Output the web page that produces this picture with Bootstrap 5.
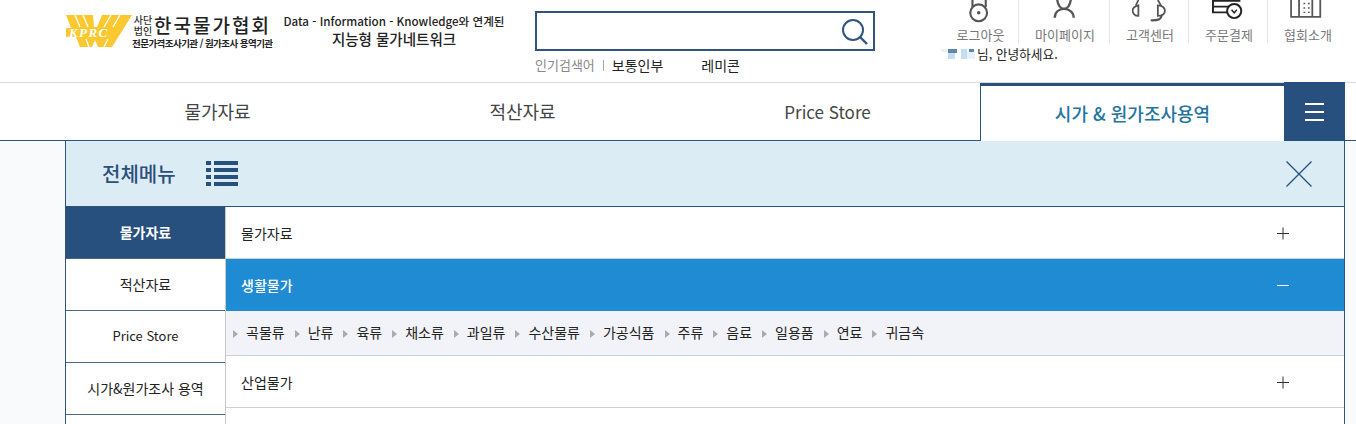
<!DOCTYPE html>
<html lang="ko">
  <head>
    <meta charset="UTF-8" />
    <meta name="viewport" content="width=device-width, initial-scale=1.0" />
    <title>한국물가협회</title>
    <link href="https://cdn.jsdelivr.net/npm/bootstrap@5.3.0/dist/css/bootstrap.min.css" rel="stylesheet" />
    <style>
      html, body { overflow: hidden; }
      body {
        background-color: #f9fafc;
        font-family: "Noto Sans CJK KR", "Liberation Sans", sans-serif;
        font-size: 14px;
        color: #222;
      }
      a { color: inherit; text-decoration: none; }

      /* top header */
      .top-head { height: 83px; background: #fff; border-bottom: 1px solid #ddd; padding-left: 66px; }
      .logo-wrap { width: 208px; padding-top: 14px; }
      .logo-mark { margin-top: 1px; }
      .logo-side { font-size: 10px; line-height: 11px; color: #333; width: 22px; font-weight: 500; }
      .logo-name { font-size: 19px; line-height: 22px; font-weight: 500; color: #222; letter-spacing: 2px; }
      .logo-sub { font-size: 9.5px; line-height: 12px; margin-top: 1px; font-weight: 700; color: #222; white-space: nowrap; letter-spacing: -.55px; }
      .tagline { width: 240px; margin-right: 21px; padding-top: 13px; text-align: center; color: #222; white-space: nowrap; }
      .tagline-en { font-size: 11.6px; line-height: 16px; font-weight: 500; }
      .tagline-ko { font-size: 14.5px; line-height: 19px; font-weight: 500; }
      .search-wrap { width: 340px; padding-top: 11px; }
      .search-box { height: 40px; border: 2px solid #2f5480; padding-right: 4px; }
      .hot-words { height: 20px; margin-top: 4px; font-size: 14px; line-height: 20px; }
      .hot-label { color: #888; font-size: 13px; }
      .hot-bar { width: 1px; height: 11px; background: #aaa; margin: 0 8px; }
      .hot-gap { margin-left: 38px; }
      .util-wrap { margin-left: 66px; width: 405px; }
      .util-item { height: 43px; width: 79px; color: #777; font-size: 13px; line-height: 16px; border-left: 1px solid #e6e6e6; }
      .util-item:first-child { border-left: 0; width: 77px; }
      .util-item.wide { width: 91px; }
      .util-item svg { display: block; height: 26px; width: 40px; }
      .util-text { margin-left: 2px; }
      .greet { margin-top: 3px; font-size: 12.7px; line-height: 16px; color: #222; }
      .mosaic { width: 34px; height: 10px; margin-right: 2px; }
      .mosaic-a { fill: #e6f2fa; }
      .mosaic-b { fill: #5d86ae; }
      .mosaic-c { fill: #c3def2; }

      /* main tabs */
      .tab-bar { height: 58px; background: #fff; border-bottom: 1px solid #2f5480; padding-left: 65px; padding-right: 11px; }
      .tab-link { width: 305px; font-size: 18px; color: #444; }
      .tab-latin { font-size: 17px; }
      .tab-link.is-on {
        height: 58px;
        background: #fff;
        color: #23749f;
        font-weight: 500;
        border-top: 3px solid #27507f;
        border-left: 1px solid #2f5480;
        width: 304px;
      }
      .burger { width: 61px; height: 59px; margin-top: -1px; background: #27507f; gap: 6px; }
      .burger span { display: block; width: 19px; height: 2px; background: #fff; }

      /* all menu panel */
      .menu-panel { width: 1280px; margin-left: 65px; border-left: 1px solid #2f5480; border-right: 1px solid #2f5480; background: #fff; height: 300px; }
      .menu-head { height: 66px; background: #dcecf4; border-bottom: 1px solid #2f5480; padding: 0 32px 0 36px; }
      .menu-title { font-size: 20px; font-weight: 500; color: #2c4f7c; margin-right: 30px; }
      .side-col { width: 160px; border-right: 1px solid #c9c9c9; }
      .side-link { height: 52px; padding-bottom: 1px; font-size: 14px; color: #222; border-bottom: 1px solid #4c6585; }
      .side-latin { font-size: 13px; }
      .side-link.is-on { background: #27507f; color: #fff; font-weight: 700; }
      .row-link { height: 52px; padding: 1px 54px 0 15px; font-size: 14px; color: #222; border-bottom: 1px solid #cfcfcf; }
      .row-link.is-on { background: #1f8bd3; color: #fff; font-weight: 500; border-bottom: 0; }
      .sub-row { height: 45px; background: #f2f3f8; border-bottom: 1px solid #cfcfcf; padding: 0 0 2px 7px; font-size: 14px; color: #222; }
      .sub-item { margin-right: 10px; white-space: nowrap; }
      .sub-item::before {
        content: "";
        display: inline-block;
        border-left: 5px solid #aaa;
        border-top: 4px solid transparent;
        border-bottom: 4px solid transparent;
        margin-right: 8px;
      }
      .sign-icon { width: 13px; height: 13px; }
    </style>
  </head>
  <body>
    <header class="top-head d-flex">
      <a href="#" class="logo-wrap d-flex">
        <svg class="logo-mark flex-shrink-0" width="66" height="32" viewBox="0 0 66 32">
          <polygon fill="#fbc92f" points="0,0 66,0 46,32 32,32 29,25 26,32 14,32 10,22 0,22 0,13 5,13" />
          <polygon fill="#fff" points="27,0 36,0 31,12 28,12" />
          <g stroke="#fff" stroke-width="1.3">
            <line x1="9" y1="0" x2="14" y2="12" />
            <line x1="17" y1="0" x2="22" y2="12" />
            <line x1="45" y1="0" x2="38" y2="12" />
            <line x1="54" y1="0" x2="47" y2="12" />
            <line x1="20" y1="24" x2="23" y2="32" />
            <line x1="42" y1="24" x2="38" y2="32" />
          </g>
          <text x="3" y="22" font-family="Liberation Serif, serif" font-style="italic" font-weight="700" font-size="13" letter-spacing="1.4" fill="#fff">KPRC</text>
        </svg>
        <div>
          <div class="d-flex align-items-center">
            <div class="logo-side text-center">사단 법인</div>
            <div class="logo-name">한국물가협회</div>
          </div>
          <div class="logo-sub">전문가격조사기관 / 원가조사 용역기관</div>
        </div>
      </a>
      <div class="tagline">
        <div class="tagline-en">Data - Information - Knowledge와 연계된</div>
        <div class="tagline-ko">지능형 물가네트워크</div>
      </div>
      <div class="search-wrap">
        <div class="search-box d-flex align-items-center justify-content-end">
          <svg width="30" height="30" viewBox="0 0 30 30" fill="none" stroke="#2f5480">
            <circle cx="14" cy="14" r="10" stroke-width="2" />
            <line x1="21" y1="21" x2="28" y2="28" stroke-width="2.4" />
          </svg>
        </div>
        <div class="hot-words d-flex align-items-center">
          <span class="hot-label">인기검색어</span><span class="hot-bar"></span>
          <a href="#">보통인부</a>
          <a href="#" class="hot-gap">레미콘</a>
        </div>
      </div>
      <div class="util-wrap">
        <div class="d-flex">
          <a href="#" class="util-item d-flex flex-column align-items-center">
            <svg viewBox="0 0 40 26" fill="none" stroke="#555" stroke-width="2.4">
              <path d="M11.5 8V0M26.5 8V0" />
              <circle cx="18.5" cy="14.5" r="9.5" />
              <circle cx="18.5" cy="14.5" r="2" fill="#555" stroke="none" />
            </svg>
            <span class="util-text mt-1">로그아웃</span>
          </a>
          <a href="#" class="util-item wide d-flex flex-column align-items-center">
            <svg viewBox="0 0 40 26" fill="none" stroke="#555" stroke-width="2.6">
              <path d="M12 -2C13 6 16 10 20 10C24 10 27 6 28 -2" />
              <path d="M9.5 20C9.5 14 14 10 20 10C26 10 31 14 31 20" />
            </svg>
            <span class="util-text mt-1">마이페이지</span>
          </a>
          <a href="#" class="util-item d-flex flex-column align-items-center">
            <svg viewBox="0 0 40 26" fill="none" stroke="#555" stroke-width="2">
              <path d="M8 6C4 7 1.5 9 1.5 12C1.5 15 4 18 8 18Z" />
              <path d="M8 0L5 6.5" />
              <path d="M30 6C35 6 38 9 38 12C38 16 35 18 30 18Z" />
              <path d="M30 0L34 7" />
              <path d="M34 18C34 22 30 23 23 23" stroke-width="2.6" stroke-linecap="round" />
            </svg>
            <span class="util-text mt-1">고객센터</span>
          </a>
          <a href="#" class="util-item d-flex flex-column align-items-center">
            <svg viewBox="0 0 40 26" fill="none" stroke="#222" stroke-width="2.2">
              <path d="M34 1H3V14H22M3 7.5H31" />
              <circle cx="27" cy="12.5" r="8" fill="#fff" />
              <path d="M24 11L27 14.5L30 11" stroke-width="1.6" />
            </svg>
            <span class="util-text mt-1">주문결제</span>
          </a>
          <a href="#" class="util-item d-flex flex-column align-items-center">
            <svg viewBox="0 0 40 26" fill="none" stroke="#555" stroke-width="2">
              <path d="M2 0V19H35V0M11 0V19M26 0V19" />
              <path d="M16 4H23M16 9H23M16 14H23" stroke-dasharray="2 3" stroke-width="1.6" />
            </svg>
            <span class="util-text mt-1">협회소개</span>
          </a>
        </div>
        <div class="greet d-flex align-items-center">
          <svg class="mosaic" viewBox="0 0 34 10">
            <rect class="mosaic-a" x="0" y="0" width="6" height="3" />
            <rect class="mosaic-b" x="7" y="0" width="9" height="4" />
            <rect class="mosaic-c" x="7" y="4" width="7" height="6" />
            <rect class="mosaic-c" x="20" y="0" width="6" height="10" />
            <rect class="mosaic-a" x="26" y="3" width="8" height="7" />
            <rect class="mosaic-b" x="28" y="0" width="5" height="3" />
          </svg>
          <span>님, 안녕하세요.</span>
        </div>
      </div>
    </header>

    <nav class="tab-bar d-flex">
      <a href="#" class="tab-link d-flex align-items-center justify-content-center">물가자료</a>
      <a href="#" class="tab-link d-flex align-items-center justify-content-center">적산자료</a>
      <a href="#" class="tab-link tab-latin d-flex align-items-center justify-content-center">Price Store</a>
      <a href="#" class="tab-link is-on d-flex align-items-center justify-content-center">시가 &amp; 원가조사용역</a>
      <a href="#" class="burger d-flex flex-column align-items-center justify-content-center"><span></span><span></span><span></span></a>
    </nav>

    <section class="menu-panel">
      <div class="menu-head d-flex align-items-center">
        <span class="menu-title">전체메뉴</span>
        <svg width="32" height="26" viewBox="0 0 32 26" fill="#27507f">
          <rect x="0" y="0" width="5" height="4" />
          <rect x="0" y="7" width="5" height="4" />
          <rect x="0" y="14" width="5" height="4" />
          <rect x="0" y="21" width="5" height="4" />
          <rect x="8" y="0" width="24" height="4" />
          <rect x="8" y="7" width="24" height="4" />
          <rect x="8" y="14" width="24" height="4" />
          <rect x="8" y="21" width="24" height="4" />
        </svg>
        <svg class="ms-auto" width="26" height="26" viewBox="0 0 26 26" stroke="#27507f" stroke-width="1.2">
          <line x1="0.5" y1="0.5" x2="25.5" y2="25.5" />
          <line x1="25.5" y1="0.5" x2="0.5" y2="25.5" />
        </svg>
      </div>
      <div class="d-flex">
        <div class="side-col flex-shrink-0">
          <a href="#" class="side-link is-on d-flex align-items-center justify-content-center">물가자료</a>
          <a href="#" class="side-link d-flex align-items-center justify-content-center">적산자료</a>
          <a href="#" class="side-link side-latin d-flex align-items-center justify-content-center">Price Store</a>
          <a href="#" class="side-link d-flex align-items-center justify-content-center">시가&amp;원가조사 용역</a>
          <a href="#" class="side-link d-flex align-items-center justify-content-center"></a>
        </div>
        <div class="flex-grow-1">
          <a href="#" class="row-link d-flex align-items-center justify-content-between">
            <span>물가자료</span>
            <svg class="sign-icon" viewBox="0 0 13 13" stroke="#333"><path d="M0 6.5H12M6 0.5V12.5" /></svg>
          </a>
          <a href="#" class="row-link is-on d-flex align-items-center justify-content-between">
            <span>생활물가</span>
            <svg class="sign-icon" viewBox="0 0 13 13" stroke="#fff"><path d="M0 6.5H12" /></svg>
          </a>
          <div class="sub-row d-flex align-items-center">
            <a href="#" class="sub-item">곡물류</a>
            <a href="#" class="sub-item">난류</a>
            <a href="#" class="sub-item">육류</a>
            <a href="#" class="sub-item">채소류</a>
            <a href="#" class="sub-item">과일류</a>
            <a href="#" class="sub-item">수산물류</a>
            <a href="#" class="sub-item">가공식품</a>
            <a href="#" class="sub-item">주류</a>
            <a href="#" class="sub-item">음료</a>
            <a href="#" class="sub-item">일용품</a>
            <a href="#" class="sub-item">연료</a>
            <a href="#" class="sub-item">귀금속</a>
          </div>
          <a href="#" class="row-link d-flex align-items-center justify-content-between">
            <span>산업물가</span>
            <svg class="sign-icon" viewBox="0 0 13 13" stroke="#333"><path d="M0 6.5H12M6 0.5V12.5" /></svg>
          </a>
        </div>
      </div>
    </section>

    <script src="https://cdn.jsdelivr.net/npm/bootstrap@5.3.0/dist/js/bootstrap.bundle.min.js"></script>
  </body>
</html>
